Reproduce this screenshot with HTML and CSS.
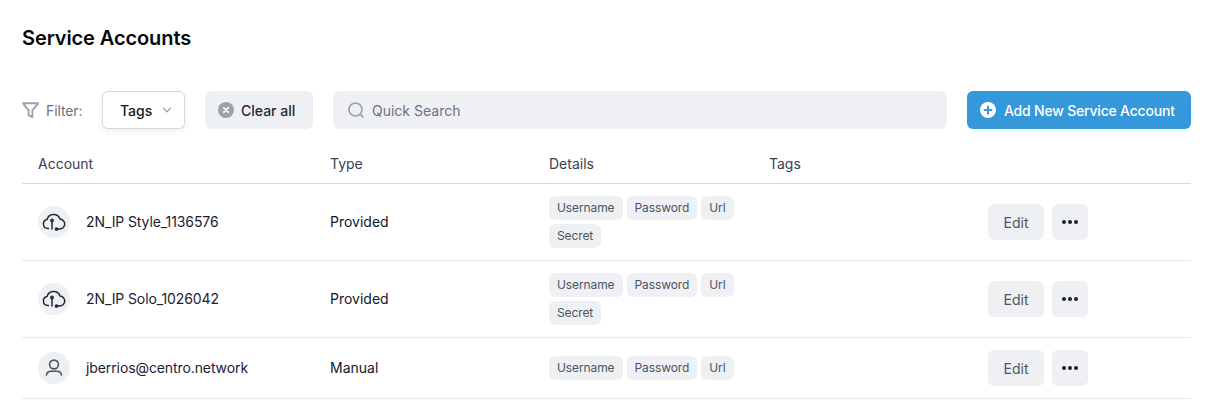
FILE: index.html
```html
<!DOCTYPE html>
<html lang="en">
<head>
<meta charset="utf-8">
<title>Service Accounts</title>
<link rel="stylesheet" href="styles.css">
</head>
<body>
<main class="page">
  <h1 class="title">Service Accounts</h1>
  <div class="toolbar">
    <div class="filter-label">
      <svg class="filter-icon" viewBox="0 0 17 17" fill="none" stroke="#9ca3af" stroke-width="1.9" stroke-linejoin="round" stroke-linecap="round"><path d="M1 1.300h15l-5.600 7v6.800l-3.800-1.900V8.300z"/></svg>
      <span>Filter:</span>
    </div>
    <button class="select">Tags
      <svg class="chev" viewBox="0 0 10 6" fill="none" stroke="#9ca3af" stroke-width="1.3" stroke-linecap="round" stroke-linejoin="round"><path d="M1.500 1.200 5 4.700l3.500-3.500"/></svg>
    </button>
    <button class="clear">
      <svg class="clear-icon" viewBox="0 0 16 16"><circle cx="8" cy="8" r="8" fill="#9ca3af"/><path d="M5.800 5.800l4.400 4.400M10.200 5.800l-4.400 4.400" stroke="#fff" stroke-width="1.800" stroke-linecap="round"/></svg>
      Clear all
    </button>
    <div class="search">
      <svg class="search-icon" viewBox="0 0 16 16" fill="none" stroke="#9ca3af" stroke-width="1.700" stroke-linecap="round"><circle cx="7.500" cy="7.500" r="6.500"/><path d="M12.400 12.400 15 15"/></svg>
      <span>Quick Search</span>
    </div>
    <button class="add">
      <svg class="add-icon" viewBox="0 0 16 16"><circle cx="8" cy="8" r="8" fill="#fff"/><path d="M8 4.600v6.800M4.600 8h6.800" stroke="#3498db" stroke-width="2" stroke-linecap="round"/></svg>
      Add New Service Account
    </button>
  </div>

  <div class="row head">
    <div>Account</div><div>Type</div><div>Details</div><div>Tags</div>
  </div>

  <div class="row item">
    <div class="account">
      <span class="avatar"><svg viewBox="0 0 24 24" fill="none" stroke="#1f2937" stroke-width="1.500" stroke-linecap="round" stroke-linejoin="round"><path d="M6.500 18.500H6A4.500 4.500 0 0 1 5 9.600 A6.800 6.800 0 0 1 18 9 A5 5 0 0 1 17.500 19 H15.500"/><path d="M10 19V11.600"/><circle cx="10" cy="10.400" r="1.200"/><circle cx="14.500" cy="19" r="1.100" fill="#1f2937"/></svg></span>
      <span>2N_IP Style_1136576</span>
    </div>
    <div>Provided</div>
    <div class="tags"><span class="tag">Username</span><span class="tag">Password</span><span class="tag">Url</span><span class="tag">Secret</span></div>
    <div></div>
    <div class="actions"><button class="btn edit">Edit</button><button class="btn more"><i></i><i></i><i></i></button></div>
  </div>

  <div class="row item">
    <div class="account">
      <span class="avatar"><svg viewBox="0 0 24 24" fill="none" stroke="#1f2937" stroke-width="1.500" stroke-linecap="round" stroke-linejoin="round"><path d="M6.500 18.500H6A4.500 4.500 0 0 1 5 9.600 A6.800 6.800 0 0 1 18 9 A5 5 0 0 1 17.500 19 H15.500"/><path d="M10 19V11.600"/><circle cx="10" cy="10.400" r="1.200"/><circle cx="14.500" cy="19" r="1.100" fill="#1f2937"/></svg></span>
      <span>2N_IP Solo_1026042</span>
    </div>
    <div>Provided</div>
    <div class="tags"><span class="tag">Username</span><span class="tag">Password</span><span class="tag">Url</span><span class="tag">Secret</span></div>
    <div></div>
    <div class="actions"><button class="btn edit">Edit</button><button class="btn more"><i></i><i></i><i></i></button></div>
  </div>

  <div class="row item short">
    <div class="account">
      <span class="avatar"><svg viewBox="0 0 24 24" fill="none" stroke="#4b5563" stroke-width="1.600" stroke-linecap="round" stroke-linejoin="round"><circle cx="12" cy="8.500" r="4.400"/><path d="M4.500 19c.4-2.600 2.300-3.800 4.500-3.800h6c2.200 0 4.100 1.200 4.500 3.800"/></svg></span>
      <span>jberrios@centro.network</span>
    </div>
    <div>Manual</div>
    <div class="tags"><span class="tag">Username</span><span class="tag">Password</span><span class="tag">Url</span></div>
    <div></div>
    <div class="actions"><button class="btn edit">Edit</button><button class="btn more"><i></i><i></i><i></i></button></div>
  </div>
</main>
</body>
</html>
```
FILE: styles.css
```css
* { box-sizing: border-box; }
html, body { margin: 0; padding: 0; background: #fff; }
body { font-family: Inter, "Liberation Sans", sans-serif; color: #111827; overflow: hidden; }
button { font-family: inherit; cursor: pointer; }
.page { padding: 25px 18px 0 22px; }
.title { margin: 0; font-size: 20px; line-height: 26px; font-weight: 600; letter-spacing: -0.1px; color: #05070d; }
.toolbar { display: flex; align-items: center; height: 38px; margin-top: 40px; }
.filter-label { display: flex; align-items: center; gap: 7px; width: 80px; font-size: 14px; letter-spacing: -0.1px; color: #6b7280; }
.filter-icon { width: 17px; height: 17px; flex: none; }
.select { display: flex; align-items: center; justify-content: space-between; width: 83px; height: 38px; padding: 0 12px 0 17px; background: #fff; border: 1px solid #d6d8e1; border-radius: 6px; box-shadow: 0 2px 6px rgba(17, 24, 39, .07); font-size: 14px; font-weight: 500; color: #111827; }
.chev { width: 10px; height: 6px; }
.clear { display: flex; align-items: center; gap: 7px; width: 108px; height: 38px; margin-left: 20px; padding: 0 0 0 13px; border: 0; border-radius: 6px; background: #eff0f4; font-size: 14px; font-weight: 500; color: #1f2937; }
.clear-icon { width: 16px; height: 16px; flex: none; }
.search { display: flex; align-items: center; gap: 8px; flex: 1; height: 38px; margin-left: 20px; padding-left: 15px; border-radius: 6px; background: #eff0f4; font-size: 14px; color: #6b7280; }
.search-icon { width: 16px; height: 16px; flex: none; }
.add { display: flex; align-items: center; gap: 8px; width: 224px; height: 38px; margin-left: 20px; padding: 0 0 0 13px; border: 0; border-radius: 6px; background: #3498db; color: #fff; font-size: 14px; font-weight: 500; letter-spacing: -0.2px; white-space: nowrap; }
.add-icon { width: 16px; height: 16px; flex: none; }
.row { display: grid; grid-template-columns: 292px 219px 220px 219px 1fr; padding-left: 16px; align-items: center; font-size: 14px; line-height: 18px; }
.head { height: 55px; border-bottom: 1px solid #d9dade; color: #374151; padding-top: 26px; align-items: start; }
.item { border-bottom: 1px solid #e9eaee; padding-top: 12px; padding-bottom: 12px; height: 77px; color: #111827; }
.item.short { height: 61px; }
.account { display: flex; align-items: center; gap: 16px; letter-spacing: -0.1px; color: #1a2233; }
.avatar { display: flex; align-items: center; justify-content: center; width: 32px; height: 32px; border-radius: 50%; background: #eff0f4; flex: none; }
.avatar svg { width: 24px; height: 24px; }
.tags { display: flex; flex-wrap: wrap; gap: 4px; width: 190px; }
.tag { display: block; height: 24px; padding: 0 8px; border-radius: 6px; background: #eff0f4; font-size: 12px; line-height: 24px; letter-spacing: -0.1px; color: #4b5563; }
.actions { display: flex; gap: 8px; }
.btn { height: 36px; border: 0; border-radius: 6px; background: #eff0f4; }
.edit { width: 56px; font-size: 14px; color: #4b5563; }
.more { display: flex; align-items: center; justify-content: center; gap: 2px; width: 36px; }
.more i { display: block; width: 4px; height: 4px; border-radius: 50%; background: #1a2233; }
```
